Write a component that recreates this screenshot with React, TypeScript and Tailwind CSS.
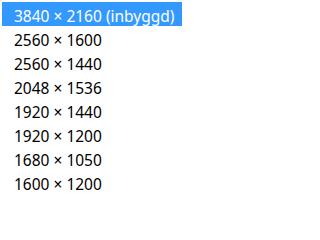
import React from "react";

const items = [
  "3840 × 2160 (inbyggd)",
  "2560 × 1600",
  "2560 × 1440",
  "2048 × 1536",
  "1920 × 1440",
  "1920 × 1200",
  "1680 × 1050",
  "1600 × 1200",
];

export default function App() {
  return (
    <div
      className="w-[311px] h-[200px] bg-white pt-[2px] pl-[2px] overflow-hidden"
      style={{ fontFamily: '"Noto Sans", "Open Sans", sans-serif' }}
    >
      <ul className="flex flex-col w-[180px]">
        {items.map((t, i) => (
          <li
            key={t}
            className={
              "h-[24px] flex items-end pl-[12px] pb-[2px] text-[15.5px] leading-[16px] whitespace-nowrap " +
              (i === 0 ? "bg-[#3399ff] text-white" : "text-black")
            }
          >
            {t}
          </li>
        ))}
      </ul>
    </div>
  );
}
